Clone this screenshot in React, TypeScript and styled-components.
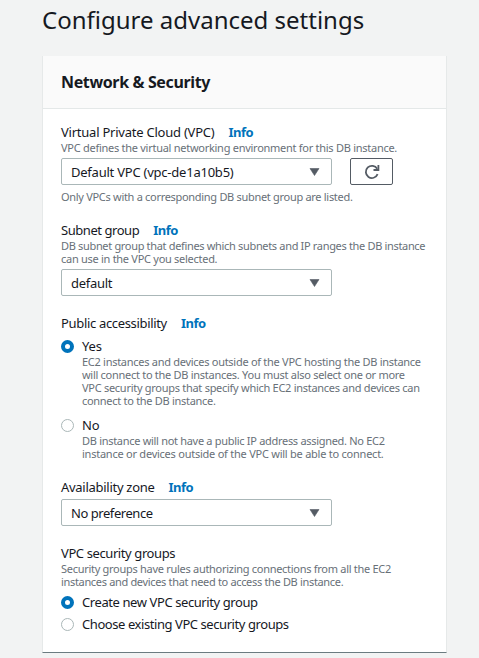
import React from 'react';
import styled, { createGlobalStyle } from 'styled-components';

const GlobalStyle = createGlobalStyle`
  * { box-sizing: border-box; }
  body {
    margin: 0;
    background: #f2f3f3;
    color: #16191f;
    font-family: "Noto Sans", "Open Sans", sans-serif;
  }
`;

const Page = styled.main`
  display: flex;
  flex-direction: column;
  width: 479px;
  height: 658px;
  padding: 0 32px 0 42px;
  overflow: hidden;
`;

const Title = styled.h1`
  margin: 0;
  height: 56px;
  padding-top: 4px;
  font-size: 24px;
  line-height: 32px;
  font-weight: 400;
  white-space: nowrap;
`;

const Card = styled.section`
  height: 597px;
  background: #fff;
  border: 1px solid #e6e9e9;
  border-top: 0;
  border-bottom: 1px solid #6b7b80;
`;

const CardHeader = styled.header`
  height: 53px;
  padding: 14px 18px 0;
  background: #fafafa;
  border-bottom: 1px solid #e4e8e8;
`;

const Heading = styled.h2`
  margin: 0;
  font-size: 16px;
  line-height: 24px;
  font-weight: 700;
  letter-spacing: -0.37px;
`;

const Form = styled.div`
  display: flex;
  flex-direction: column;
  padding: 15px 0 0 18px;
`;

const Field = styled.div<{ $gap: number }>`
  display: flex;
  flex-direction: column;
  margin-bottom: ${(p) => p.$gap}px;
`;

const LabelRow = styled.div`
  display: flex;
  gap: 14px;
  height: 16px;
`;

const Text = styled.span<{ $track: number }>`
  font-size: 13px;
  line-height: 16px;
  letter-spacing: ${(p) => p.$track}px;
  white-space: nowrap;
`;

const InfoLink = styled.a`
  color: #0073bb;
  font-size: 13px;
  line-height: 16px;
  font-weight: 700;
  letter-spacing: -0.5px;
`;

const Hint = styled.div`
  padding-top: 1px;
`;

const HintLine = styled.div<{ $track: number }>`
  color: #687078;
  font-size: 11px;
  line-height: 13px;
  letter-spacing: ${(p) => p.$track}px;
  white-space: nowrap;
`;

const Controls = styled.div`
  display: flex;
  gap: 18px;
  margin-top: 4px;
`;

const SelectBox = styled.button<{ $track: number }>`
  display: flex;
  align-items: center;
  justify-content: space-between;
  width: 271px;
  height: 27px;
  padding: 0 11px 0 9px;
  background: #fff;
  border: 1px solid #aab7b8;
  border-radius: 2px;
  color: #16191f;
  font: 13px/16px "Noto Sans", "Open Sans", sans-serif;
  letter-spacing: ${(p) => p.$track}px;
`;

const IconButton = styled.button`
  display: flex;
  align-items: center;
  justify-content: center;
  width: 43px;
  height: 27px;
  padding: 0;
  background: #fff;
  border: 1px solid #545b64;
  border-radius: 2px;
`;

const Note = styled.div`
  margin-top: 5px;
`;

const RadioOption = styled.label<{ $gap: number }>`
  display: grid;
  grid-template-columns: 13px 1fr;
  column-gap: 8px;
  margin-top: ${(p) => p.$gap}px;
`;

const RadioDot = styled.span<{ $on?: boolean }>`
  width: 13px;
  height: 13px;
  margin-top: 2px;
  border-radius: 50%;
  background: #fff;
  border: ${(p) => (p.$on ? '4px solid #0073bb' : '1px solid #aab7b8')};
`;

const OptionBody = styled.div`
  display: flex;
  flex-direction: column;
`;

type Line = [text: string, track: number];

const Label = ({ line, info }: { line: Line; info?: boolean }) => (
  <LabelRow>
    <Text $track={line[1]}>{line[0]}</Text>
    {info && <InfoLink>Info</InfoLink>}
  </LabelRow>
);

const Hints = ({ lines }: { lines: Line[] }) => (
  <Hint>
    {lines.map(([text, track]) => (
      <HintLine key={text} $track={track}>{text}</HintLine>
    ))}
  </Hint>
);

const Select = ({ line }: { line: Line }) => (
  <SelectBox $track={line[1]}>
    {line[0]}
    <svg width="11" height="8" viewBox="0 0 11 8">
      <path d="M1 .5h9L5.5 7.5z" fill="#545b64" stroke="#545b64" strokeWidth=".6" />
    </svg>
  </SelectBox>
);

const Radio = ({ line, on, gap, hints }: { line: Line; on?: boolean; gap: number; hints?: Line[] }) => (
  <RadioOption $gap={gap}>
    <RadioDot $on={on} />
    <OptionBody>
      <Text $track={line[1]}>{line[0]}</Text>
      {hints && <Hints lines={hints} />}
    </OptionBody>
  </RadioOption>
);

export default function App() {
  return (
    <>
      <GlobalStyle />
      <Page>
        <Title>Configure advanced settings</Title>
        <Card>
          <CardHeader>
            <Heading>Network &amp; Security</Heading>
          </CardHeader>
          <Form>
            <Field $gap={19}>
              <Label line={['Virtual Private Cloud (VPC)', -0.23]} info />
              <Hints lines={[['VPC defines the virtual networking environment for this DB instance.', -0.27]]} />
              <Controls>
                <Select line={['Default VPC (vpc-de1a10b5)', -0.23]} />
                <IconButton aria-label="Refresh">
                  <svg width="16" height="16" viewBox="0 0 16 16" fill="none" stroke="#545b64" strokeWidth="1.8">
                    <path d="M13.6 10.2A6.1 6.1 0 1 1 13.2 4.8" />
                    <path d="M14.4 1v5H9.5" />
                  </svg>
                </IconButton>
              </Controls>
              <Note>
                <HintLine $track={-0.3}>Only VPCs with a corresponding DB subnet group are listed.</HintLine>
              </Note>
            </Field>
            <Field $gap={19}>
              <Label line={['Subnet group', -0.45]} info />
              <Hints
                lines={[
                  ['DB subnet group that defines which subnets and IP ranges the DB instance', -0.33],
                  ['can use in the VPC you selected.', -0.28],
                ]}
              />
              <Controls>
                <Select line={['default', -0.3]} />
              </Controls>
            </Field>
            <Field $gap={19}>
              <Label line={['Public accessibility', -0.33]} info />
              <Radio
                on
                gap={7}
                line={['Yes', -0.2]}
                hints={[
                  ['EC2 instances and devices outside of the VPC hosting the DB instance', -0.28],
                  ['will connect to the DB instances. You must also select one or more', -0.28],
                  ['VPC security groups that specify which EC2 instances and devices can', -0.28],
                  ['connect to the DB instance.', -0.29],
                ]}
              />
              <Radio
                gap={10}
                line={['No', -0.2]}
                hints={[
                  ['DB instance will not have a public IP address assigned. No EC2', -0.3],
                  ['instance or devices outside of the VPC will be able to connect.', -0.24],
                ]}
              />
            </Field>
            <Field $gap={19}>
              <Label line={['Availability zone', -0.28]} info />
              <Controls>
                <Select line={['No preference', -0.45]} />
              </Controls>
            </Field>
            <Field $gap={0}>
              <Label line={['VPC security groups', -0.4]} />
              <Hints
                lines={[
                  ['Security groups have rules authorizing connections from all the EC2', -0.285],
                  ['instances and devices that need to access the DB instance.', -0.33],
                ]}
              />
              <Radio on gap={6} line={['Create new VPC security group', -0.41]} />
              <Radio gap={6} line={['Choose existing VPC security groups', -0.43]} />
            </Field>
          </Form>
        </Card>
      </Page>
    </>
  );
}
